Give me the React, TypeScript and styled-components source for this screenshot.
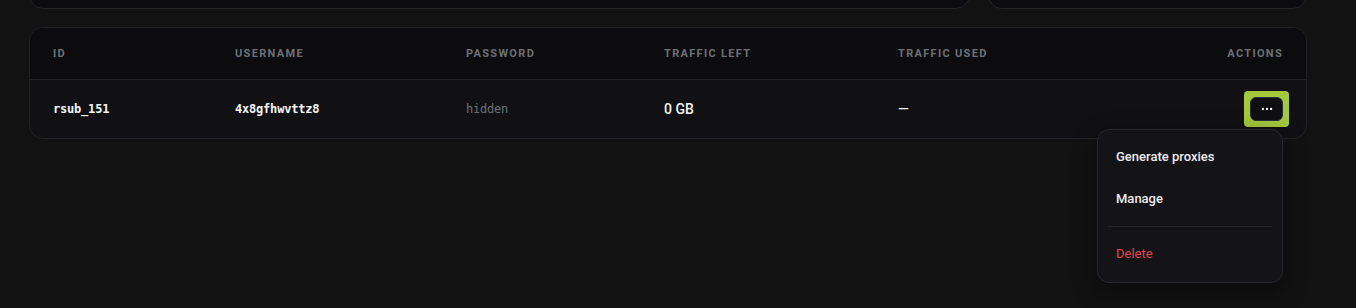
import React from "react";
import styled, { createGlobalStyle } from "styled-components";
import { Ellipsis } from "lucide-react";

const GlobalStyle = createGlobalStyle`
  html {
    background: #121212;
    overflow: hidden;
  }
  body {
    margin: 0;
    padding: 0;
    min-height: 308px;
    background: #121212;
    font-family: Roboto, "Liberation Sans", Arial, sans-serif;
    color: #f2f2f2;
  }
  * { box-sizing: border-box; }
`;

const Page = styled.div`
  padding: 0 49px 0 29px;
  margin-top: -52px;
  display: flex;
  flex-direction: column;
  gap: 18px;
`;

const TopRow = styled.div`
  display: grid;
  grid-template-columns: 941px 319px;
  gap: 18px;
`;

const TopCard = styled.div`
  height: 61px;
  background: #0d0d0f;
  border: 1px solid #242428;
  border-radius: 14px;
`;

const TableCard = styled.div`
  background: #111113;
  border: 1px solid #232326;
  border-radius: 14px;
`;

const Row = styled.div<{ $head?: boolean }>`
  display: grid;
  grid-template-columns: 182px 231px 198px 234px 1fr auto;
  align-items: center;
  height: ${(p) => (p.$head ? "52px" : "58px")};
  background: ${(p) => (p.$head ? "#0c0c0e" : "transparent")};
  border-bottom: ${(p) => (p.$head ? "1px solid #232326" : "none")};
  border-radius: ${(p) => (p.$head ? "13px 13px 0 0" : "0 0 13px 13px")};
`;

const HeadCell = styled.div<{ $right?: boolean }>`
  padding: 0 23px;
  font-family: Roboto, "Liberation Sans", Arial, sans-serif;
  font-size: 11px;
  font-weight: 700;
  letter-spacing: 0.12em;
  text-transform: uppercase;
  color: #6d7077;
  text-align: ${(p) => (p.$right ? "right" : "left")};
`;

const Cell = styled.div<{ $right?: boolean }>`
  padding: 0 23px;
  display: flex;
  align-items: center;
  justify-content: ${(p) => (p.$right ? "flex-end" : "flex-start")};
  position: relative;
`;

const Mono = styled.span<{ $muted?: boolean }>`
  font-family: "DejaVu Sans Mono", "Liberation Mono", monospace;
  font-size: 12px;
  font-weight: ${(p) => (p.$muted ? 400 : 700)};
  color: ${(p) => (p.$muted ? "#6b7078" : "#f4f4f5")};
  letter-spacing: -0.2px;
`;

const Value = styled.span`
  font-family: Roboto, "Liberation Sans", Arial, sans-serif;
  font-size: 14px;
  font-weight: 500;
  color: #f5f5f5;
`;

const Highlight = styled.span`
  display: inline-flex;
  padding: 6px;
  margin-right: -6px;
  background: #a4c83e;
  border-radius: 4px;
`;

const MenuButton = styled.button`
  width: 33px;
  height: 24px;
  display: flex;
  align-items: center;
  justify-content: center;
  padding: 0;
  background: #0f0f12;
  border: 1px solid #2a3042;
  border-radius: 6px;
  color: #ffffff;
  cursor: pointer;
`;

const Menu = styled.div`
  position: absolute;
  top: calc(100% + 2px);
  right: 23px;
  width: 186px;
  padding: 10px 10px 13px;
  background: #141418;
  border: 1px solid #26262b;
  border-radius: 12px;
  box-shadow: 0 8px 24px rgba(0, 0, 0, 0.45);
  display: flex;
  flex-direction: column;
  z-index: 10;
`;

const MenuItem = styled.div<{ $danger?: boolean }>`
  height: 32px;
  display: flex;
  align-items: center;
  padding: 0 8px;
  font-family: Roboto, "Liberation Sans", Arial, sans-serif;
  font-size: 13px;
  font-weight: ${(p) => (p.$danger ? 400 : 500)};
  color: ${(p) => (p.$danger ? "#e0484a" : "#ececee")};
  border-radius: 6px;
  & + & {
    margin-top: 10px;
  }
`;

const Separator = styled.div`
  height: 1px;
  background: #26262b;
  margin: 12px 0 10px;
`;

export default function App() {
  return (
    <>
      <GlobalStyle />
      <Page>
        <TopRow>
          <TopCard />
          <TopCard />
        </TopRow>
        <TableCard>
          <Row $head>
            <HeadCell>ID</HeadCell>
            <HeadCell>Username</HeadCell>
            <HeadCell>Password</HeadCell>
            <HeadCell>Traffic left</HeadCell>
            <HeadCell>Traffic used</HeadCell>
            <HeadCell $right>Actions</HeadCell>
          </Row>
          <Row>
            <Cell>
              <Mono>rsub_151</Mono>
            </Cell>
            <Cell>
              <Mono>4x8gfhwvttz8</Mono>
            </Cell>
            <Cell>
              <Mono $muted>hidden</Mono>
            </Cell>
            <Cell>
              <Value>0 GB</Value>
            </Cell>
            <Cell>
              <Value>—</Value>
            </Cell>
            <Cell $right>
              <Highlight>
                <MenuButton aria-label="Actions">
                  <Ellipsis size={14} strokeWidth={2} />
                </MenuButton>
              </Highlight>
              <Menu>
                <MenuItem>Generate proxies</MenuItem>
                <MenuItem>Manage</MenuItem>
                <Separator />
                <MenuItem $danger>Delete</MenuItem>
              </Menu>
            </Cell>
          </Row>
        </TableCard>
      </Page>
    </>
  );
}
